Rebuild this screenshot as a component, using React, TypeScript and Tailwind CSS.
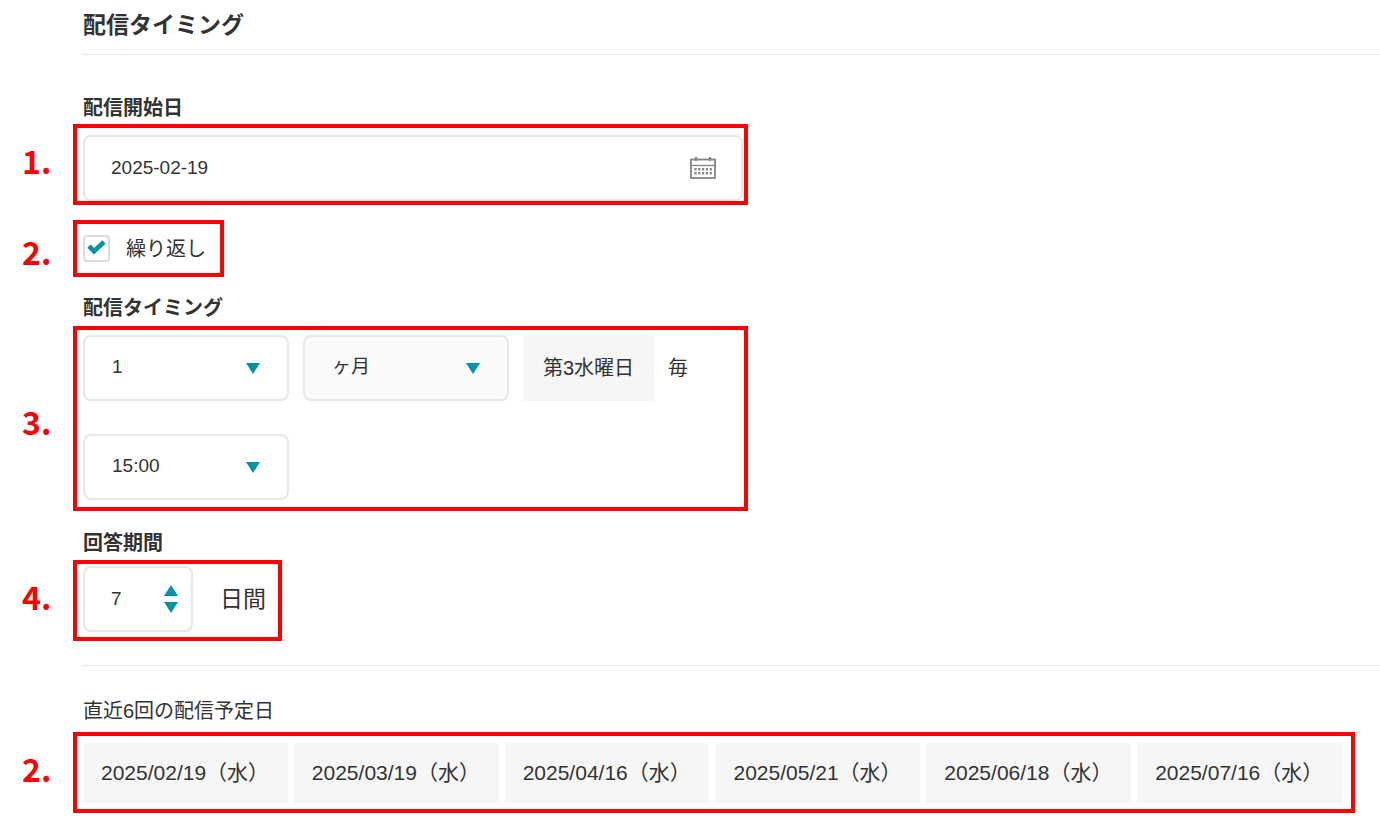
import { useState } from "react";
import type { ReactNode } from "react";

const dates = [
  "2025/02/19（水）",
  "2025/03/19（水）",
  "2025/04/16（水）",
  "2025/05/21（水）",
  "2025/06/18（水）",
  "2025/07/16（水）",
];

function Callout({
  mark,
  low = false,
  className,
  children,
}: {
  mark: string;
  low?: boolean;
  className: string;
  children: ReactNode;
}) {
  return (
    <div className="flex items-center">
      <span
        className={`w-[51px] shrink-0 font-['Noto_Sans_CJK_JP',sans-serif] text-[32px] leading-10 font-bold text-[#ff0000] ${low ? "pt-1" : "pb-[10px]"}`}
      >
        {mark}
      </span>
      <div className={`border-4 border-[#ff0000] pl-[6px] ${className}`}>{children}</div>
    </div>
  );
}

function Triangle({ up = false }: { up?: boolean }) {
  return (
    <svg width="14" height="11" viewBox="0 0 14 11" className="block fill-[#0092a6]" aria-hidden="true">
      <path d={up ? "M7 0 14 11H0Z" : "M0 0H14L7 11Z"} />
    </svg>
  );
}

function Dropdown({ label, options, tinted = false }: { label: string; options: string[]; tinted?: boolean }) {
  return (
    <div className="relative w-[206px]">
      <select
        aria-label={label}
        className={`block h-[66px] w-full appearance-none rounded-lg border-2 border-[#e7e7e7] pb-[2px] pl-[27px] text-[19px] ${tinted ? "bg-[#fafafa]" : "bg-white"}`}
      >
        {options.map((o) => (
          <option key={o}>{o}</option>
        ))}
      </select>
      <span className="pointer-events-none absolute inset-y-0 right-[29px] flex items-center">
        <Triangle />
      </span>
    </div>
  );
}

function CalendarIcon() {
  return (
    <svg width="26" height="24" viewBox="0 0 26 24" fill="none" stroke="#858585" aria-hidden="true">
      <rect x="1" y="3.5" width="24" height="18.5" strokeWidth="1.8" />
      <path d="M1 9.5H25" strokeWidth="1.3" />
      <path d="M6 1V5M20 1V5" strokeWidth="2.4" />
      <path d="M4.4 13.2H22M4.4 17.2H22" strokeWidth="2.4" strokeDasharray="2.2 1.6" />
      <path d="M3 15.2H23" stroke="#fff" strokeWidth="0.5" />
    </svg>
  );
}

export default function App() {
  const [repeat, setRepeat] = useState(true);
  const [days, setDays] = useState(7);

  return (
    <main className="bg-white pt-[10px] pb-5 pl-[22px] font-['Liberation_Sans','Noto_Sans_CJK_JP',sans-serif] text-[20px] leading-6 text-[#333]">
      <h1 className="ml-[61px] text-[23px] leading-[30px] font-bold">配信タイミング</h1>
      <hr className="mt-[14px] ml-[60px] border-[#e7e7e7]" />

      <label htmlFor="start" className="mt-[41px] ml-[61px] block font-bold">
        配信開始日
      </label>
      <div className="mt-1">
        <Callout mark="1." className="w-full max-w-[675px] pt-[7px] pr-px">
          <div className="relative">
            <input
              id="start"
              type="text"
              defaultValue="2025-02-19"
              className="block h-[66px] w-full rounded-lg border-2 border-[#e7e7e7] bg-white pl-[26px] text-[19px]"
            />
            <button type="button" aria-label="カレンダー" className="absolute inset-y-0 right-[27px] flex items-center">
              <CalendarIcon />
            </button>
          </div>
        </Callout>
      </div>

      <div className="mt-[15px]">
        <Callout mark="2." low className="py-[10px] pr-[14px]">
          <label className="flex h-[29px] items-center gap-4">
            <span className="relative block size-[27px]">
              <input
                type="checkbox"
                checked={repeat}
                onChange={(e) => setRepeat(e.target.checked)}
                className="block size-[27px] appearance-none rounded-[4px] border-2 border-[#dcdcdc] bg-white"
              />
              {repeat && (
                <svg viewBox="0 0 27 27" className="pointer-events-none absolute inset-0" fill="none" aria-hidden="true">
                  <path d="M6 11.2 11 16.2 21 7" stroke="#0092a6" strokeWidth="4.6" />
                </svg>
              )}
            </span>
            <span>繰り返し</span>
          </label>
        </Callout>
      </div>

      <h2 className="mt-[19px] ml-[61px] font-bold">配信タイミング</h2>
      <div className="mt-[6px]">
        <Callout mark="3." low className="w-full max-w-[675px] pt-[5px] pb-[7px]">
          <div className="flex flex-wrap items-center gap-x-[14px] gap-y-[33px]">
            <Dropdown label="間隔" options={["1", "2", "3"]} />
            <Dropdown label="単位" options={["ヶ月", "週間"]} tinted />
            <span className="flex h-[66px] w-[131px] items-center justify-center bg-[#f6f6f6]">第3水曜日</span>
            <span className="grow">毎</span>
            <Dropdown label="時刻" options={["15:00", "16:00", "17:00"]} />
          </div>
        </Callout>
      </div>

      <label htmlFor="days" className="mt-5 ml-[61px] block font-bold">
        回答期間
      </label>
      <div className="mt-[5px]">
        <Callout mark="4." className="pt-[2px] pr-[12px] pb-[5px]">
          <div className="flex items-center gap-[27px]">
            <div className="relative w-[110px]">
              <input
                id="days"
                type="text"
                inputMode="numeric"
                value={days}
                onChange={(e) => setDays(Number(e.target.value) || 0)}
                className="block h-[66px] w-full rounded-lg border-2 border-[#e7e7e7] bg-white pl-[26px] text-[19px]"
              />
              <span className="absolute inset-y-0 right-[15px] flex flex-col justify-center gap-[6px]">
                <button type="button" aria-label="増やす" onClick={() => setDays(days + 1)}>
                  <Triangle up />
                </button>
                <button type="button" aria-label="減らす" onClick={() => setDays(Math.max(0, days - 1))}>
                  <Triangle />
                </button>
              </span>
            </div>
            <span className="text-[23px]">日間</span>
          </div>
        </Callout>
      </div>

      <hr className="mt-6 ml-[60px] border-[#e7e7e7]" />

      <h2 className="mt-[33px] ml-[61px]">直近6回の配信予定日</h2>
      <div className="mt-[9px] mr-[25px]">
        <Callout mark="2." className="flex-1 pt-[7px] pr-[9px] pb-[6px]">
          <ul className="grid grid-cols-6 gap-[6px]">
            {dates.map((d) => (
              <li key={d} className="flex h-[60px] items-center bg-[#f6f6f6] pl-[18px] text-[21px] whitespace-nowrap">
                {d}
              </li>
            ))}
          </ul>
        </Callout>
      </div>
    </main>
  );
}
